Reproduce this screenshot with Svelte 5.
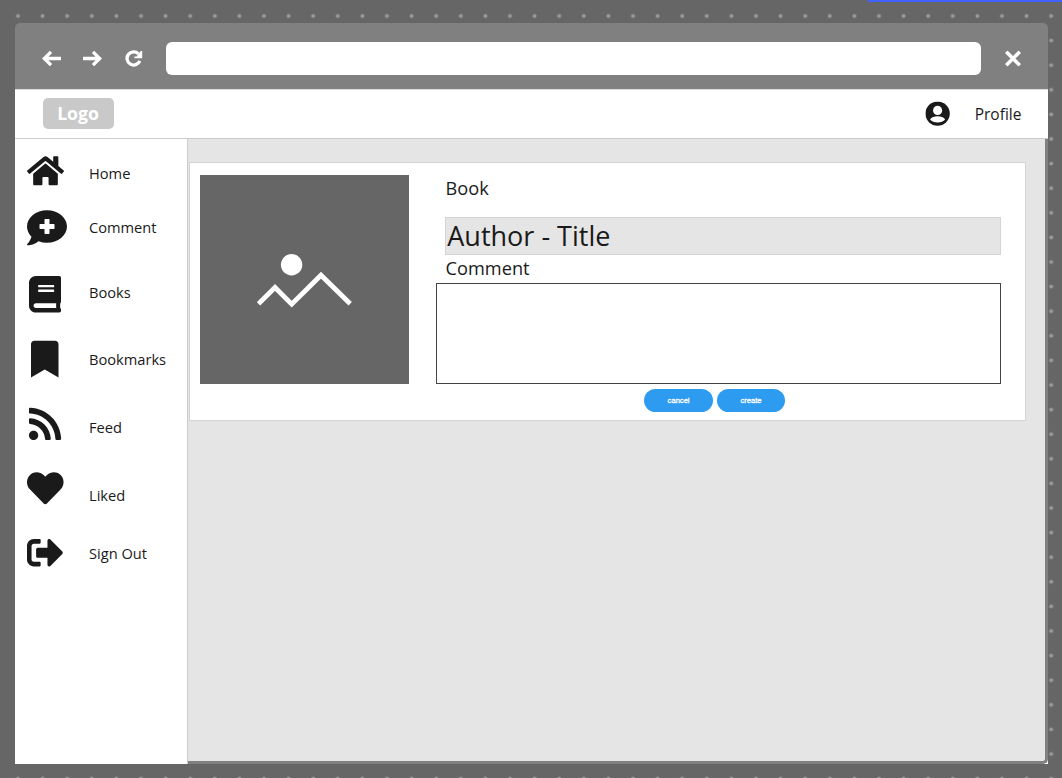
<script>
  const items = [
    {
      label: 'Home', w: 37, h: 29, dy: -2.7, box: '0 32 576 448',
      d: 'M280.37 148.26L96 300.11V464a16 16 0 0 0 16 16l112.06-.29a16 16 0 0 0 15.92-16V368a16 16 0 0 1 16-16h64a16 16 0 0 1 16 16v95.64a16 16 0 0 0 16 16.05L464 480a16 16 0 0 0 16-16V300L295.67 148.26a12.19 12.19 0 0 0-15.3 0zM571.6 251.47L488 182.56V44.05a12 12 0 0 0-12-12h-56a12 12 0 0 0-12 12v72.61L318.47 43a48 48 0 0 0-61 0L4.34 251.47a12 12 0 0 0-1.6 16.9l25.5 31A12 12 0 0 0 45.15 301l235.22-193.74a12.19 12.19 0 0 1 15.3 0L530.9 301a12 12 0 0 0 16.9-1.6l25.5-31a12 12 0 0 0-1.7-16.93z'
    },
    {
      label: 'Comment', w: 40, h: 35, dy: 0.2, box: '0 32 512 448',
      d: 'M256 32C114.62 32 0 125.12 0 240c0 49.56 21.41 95 57 130.74C44.46 421.05 2.7 466 2.2 466.5A8 8 0 0 0 8 480c66.26 0 116-31.75 140.6-51.38A304.66 304.66 0 0 0 256 448c141.39 0 256-93.12 256-208S397.39 32 256 32zm96 232a8 8 0 0 1-8 8h-56v56a8 8 0 0 1-8 8h-48a8 8 0 0 1-8-8v-56h-56a8 8 0 0 1-8-8v-48a8 8 0 0 1 8-8h56v-56a8 8 0 0 1 8-8h48a8 8 0 0 1 8 8v56h56a8 8 0 0 1 8 8z'
    },
    {
      label: 'Books', w: 32, h: 36.6, dy: 1.9, box: '0 0 448 512',
      d: 'M448 360V24c0-13.3-10.7-24-24-24H96C43 0 0 43 0 96v320c0 53 43 96 96 96h328c13.3 0 24-10.7 24-24v-16c0-7.5-3.5-14.3-8.9-18.7-4.2-15.4-4.2-59.3 0-74.7 5.4-4.3 8.9-11.1 8.9-18.6zM128 134c0-3.3 2.7-6 6-6h212c3.3 0 6 2.7 6 6v20c0 3.3-2.7 6-6 6H134c-3.3 0-6-2.7-6-6v-20zm0 64c0-3.3 2.7-6 6-6h212c3.3 0 6 2.7 6 6v20c0 3.3-2.7 6-6 6H134c-3.3 0-6-2.7-6-6v-20zm253.4 250H96c-17.7 0-32-14.3-32-32 0-17.6 14.4-32 32-32h285.4c-1.9 17.1-1.9 46.9 0 64z'
    },
    {
      label: 'Bookmarks', w: 27.5, h: 36.7, dy: -0.2, box: '0 0 384 512',
      d: 'M0 512V48C0 21.49 21.49 0 48 0h288c26.51 0 48 21.49 48 48v464L192 400 0 512z'
    },
    {
      label: 'Feed', w: 32.2, h: 32.2, dy: -3.2, box: '0 32 448 448',
      d: 'M128.081 415.959c0 35.369-28.672 64.041-64.041 64.041S0 451.328 0 415.959s28.672-64.041 64.041-64.041 64.04 28.673 64.04 64.041zm175.66 47.25c-8.354-154.6-132.185-278.587-286.95-286.95C7.656 175.765 0 183.105 0 192.253v48.069c0 8.415 6.49 15.472 14.887 16.018 111.832 7.284 201.473 96.702 208.772 208.772.547 8.397 7.604 14.887 16.018 14.887h48.069c9.149.001 16.489-7.655 15.995-16.79zm144.249.288C439.596 229.677 251.465 40.445 16.503 32.01 7.473 31.686 0 38.981 0 48.016v48.068c0 8.625 6.835 15.645 15.453 15.999 191.179 7.839 344.627 161.316 352.465 352.465.353 8.618 7.373 15.453 15.999 15.453h48.068c9.034-.001 16.329-7.474 16.005-16.504z'
    },
    {
      label: 'Liked', w: 36.6, h: 32, dy: -6.8, box: '0 32 512 448',
      d: 'M462.3 62.6C407.5 15.9 326 24.3 275.7 76.2L256 96.5l-19.7-20.3C186.1 24.3 104.5 15.9 49.7 62.6c-62.8 53.6-66.1 149.8-9.9 207.9l193.5 199.8c12.5 12.9 32.8 12.9 45.3 0l193.5-199.8c56.3-58.1 53-154.3-9.8-207.9z'
    },
    {
      label: 'Sign Out', w: 36.4, h: 27.3, dy: 0.1, box: '0 64 512 384',
      d: 'M497 273L329 441c-15 15-41 4.5-41-17v-96H152c-13.3 0-24-10.7-24-24v-96c0-13.3 10.7-24 24-24h136V88c0-21.4 25.9-32 41-17l168 168c9.3 9.4 9.3 24.6 0 34zM192 436v-40c0-6.6-5.4-12-12-12H96c-17.7 0-32-14.3-32-32V160c0-17.7 14.3-32 32-32h84c6.6 0 12-5.4 12-12V76c0-6.6-5.4-12-12-12H96c-53 0-96 43-96 96v192c0 53 43 96 96 96h84c6.6 0 12-5.4 12-12z'
    }
  ];
</script>

<div class="canvas">
  <svg class="dots" width="1062" height="778" aria-hidden="true">
    <defs>
      <pattern id="grid" x="5.7" y="3.7" width="24.6" height="24.6" patternUnits="userSpaceOnUse">
        <circle cx="12.3" cy="12.3" r="2" fill="#9a9a9a" />
      </pattern>
    </defs>
    <rect width="1062" height="778" fill="url(#grid)" />
  </svg>
  <div class="accent"></div>

  <div class="window">
    <div class="chrome">
      <svg class="back" width="19" height="16" viewBox="0 0 19 16"><path d="M19 8H2M9 1.3L2.3 8L9 14.7" /></svg>
      <svg class="forward" width="19" height="16" viewBox="0 0 19 16"><path d="M0 8H17M10 1.3L16.7 8L10 14.7" /></svg>
      <svg class="reload" width="18" height="18" viewBox="0 0 18 18">
        <path d="M13.4 4.3A6.6 6.6 0 1 0 14.8 11.4" />
        <path class="tip" d="M17.2 1.6V8.8H9.4V6.9H11.6L15.8 1.6Z" />
      </svg>
      <div class="address"></div>
      <svg class="close" width="16" height="16" viewBox="0 0 16 16"><path d="M1.2 1.2L14.8 14.8M14.8 1.2L1.2 14.8" /></svg>
    </div>

    <header>
      <div class="logo">Logo</div>
      <div class="profile">
        <svg width="24.4" height="24.4" viewBox="0 0 24 24">
          <circle cx="12" cy="12" r="12" fill="#1a1a1a" />
          <circle cx="12" cy="8.9" r="4.5" fill="#fff" />
          <path d="M4.6 17.9C5.8 15.7 9 14.7 12 14.7S18.2 15.7 19.4 17.9C17.8 19.7 15.2 20.8 12 20.8S6.2 19.7 4.6 17.9Z" fill="#fff" />
        </svg>
        <span>Profile</span>
      </div>
    </header>

    <div class="body">
      <nav>
        {#each items as item}
          <div class="item">
            <svg
              width={item.w}
              height={item.h}
              viewBox={item.box}
              preserveAspectRatio="none"
              style="transform: translateY({item.dy}px)"
            ><path d={item.d} /></svg>
            <span>{item.label}</span>
          </div>
        {/each}
      </nav>

      <div class="stage">
        <main>
          <section class="card">
            <div class="cover">
              <svg width="96" height="56" viewBox="0 0 96 56">
                <circle cx="34.6" cy="12.8" r="10.7" fill="#fff" />
                <path d="M1.5 51.8L18 35.5L34.7 52.2L64 23.2L93.2 51.8" />
              </svg>
            </div>
            <div class="form">
              <div class="label first">Book</div>
              <div class="title">Author - Title</div>
              <div class="label second">Comment</div>
              <div class="area"></div>
              <div class="actions">
                <button>cancel</button>
                <button>create</button>
              </div>
            </div>
          </section>
        </main>
      </div>
    </div>
  </div>
</div>

<style>
  :global(body) {
    margin: 0;
    overflow: hidden;
  }
  * {
    box-sizing: border-box;
  }
  .canvas {
    position: relative;
    width: 1062px;
    height: 778px;
    padding: 23px 14px 14px 15px;
    background: #666;
    overflow: hidden;
    font-family: 'Open Sans', 'Noto Sans', sans-serif;
    color: #1a1a1a;
  }
  .dots {
    position: absolute;
    inset: 0;
  }
  .accent {
    position: absolute;
    top: -4px;
    left: 867px;
    width: 210px;
    height: 6px;
    border-radius: 6px;
    background: #4262ff;
  }
  .window {
    position: relative;
    width: 1033px;
    height: 741px;
    display: flex;
    flex-direction: column;
  }
  .chrome {
    flex: none;
    height: 66px;
    display: flex;
    align-items: center;
    padding: 5px 27px 0 27.4px;
    background: #808080;
    border-radius: 5px 5px 0 0;
  }
  .chrome svg {
    flex: none;
    fill: none;
    stroke: #fff;
    stroke-width: 3.3;
    transform: translateY(-0.5px);
  }
  .forward {
    margin-left: 22px;
  }
  .reload {
    margin-left: 22.4px;
  }
  .chrome .tip {
    fill: #fff;
    stroke: none;
  }
  .address {
    flex: 1;
    height: 33px;
    margin: -1px 24px 0 23.2px;
    border-radius: 6px;
    background: #fff;
  }
  .chrome .close {
    stroke-width: 3.6;
  }
  header {
    flex: none;
    height: 50px;
    display: flex;
    align-items: center;
    justify-content: space-between;
    padding: 0 26.6px 1px 27.5px;
    border-top: 1px solid #ddd;
    border-bottom: 1px solid #ccc;
    background: #fff;
  }
  .logo {
    width: 71px;
    height: 31px;
    border-radius: 5px;
    background: #c9c9c9;
    color: #fff;
    font-size: 17.6px;
    font-weight: 700;
    line-height: 31px;
    text-align: center;
  }
  .profile {
    display: flex;
    align-items: center;
    gap: 25px;
    font-size: 15.5px;
  }
  .profile svg {
    transform: translate(0.4px, 0.4px);
  }
  .profile span {
    padding-top: 2px;
  }
  .body {
    flex: 1;
    display: flex;
    min-height: 0;
  }
  nav {
    width: 173px;
    padding: 7px 0 0 12px;
    display: grid;
    grid-template-rows: 54px 54px 76px 58px 78px 58px 58px;
    background: #fff;
    border-right: 1px solid #ccc;
  }
  .item {
    display: grid;
    grid-template-columns: 36.4px auto;
    column-gap: 25.6px;
    align-items: center;
    font-size: 14.65px;
  }
  .item svg {
    justify-self: center;
    overflow: visible;
    fill: #1a1a1a;
  }
  .item:nth-child(2) svg {
    justify-self: start;
  }
  .stage {
    flex: 1;
    display: flex;
    background: #fff;
  }
  main {
    flex: 1;
    padding: 23px 0 0 1px;
    background: #e5e5e5;
    border-right: 3px solid #808080;
    border-bottom: 3px solid #808080;
    border-bottom-right-radius: 5px;
  }
  .card {
    width: 837px;
    height: 259px;
    display: flex;
    gap: 27px;
    padding: 12px 24px 0 10px;
    background: #fff;
    border: 1px solid #d4d4d4;
  }
  .cover {
    width: 209px;
    height: 209px;
    flex: none;
    display: flex;
    align-items: center;
    justify-content: center;
    background: #666;
  }
  .cover path {
    fill: none;
    stroke: #fff;
    stroke-width: 4.8;
  }
  .form {
    flex: 1;
    display: flex;
    flex-direction: column;
  }
  .label {
    padding-left: 9.6px;
    font-size: 18.2px;
  }
  .first {
    height: 42px;
    line-height: 27px;
  }
  .title {
    height: 38px;
    margin-left: 9px;
    padding-left: 1.3px;
    line-height: 36px;
    font-size: 27px;
    background: #e5e5e5;
    border: 1px solid #d4d4d4;
  }
  .second {
    height: 28px;
    line-height: 27px;
  }
  .area {
    height: 101px;
    border: 1px solid #444;
  }
  .actions {
    display: flex;
    gap: 4px;
    margin: 5px 0 0 208.4px;
  }
  button {
    width: 68.4px;
    height: 23px;
    padding: 0;
    border: 0;
    border-radius: 12px;
    background: #2d9bf0;
    color: #fff;
    font: 7.6px 'Liberation Sans', sans-serif;
    -webkit-text-stroke: 0.3px #fff;
  }
</style>
